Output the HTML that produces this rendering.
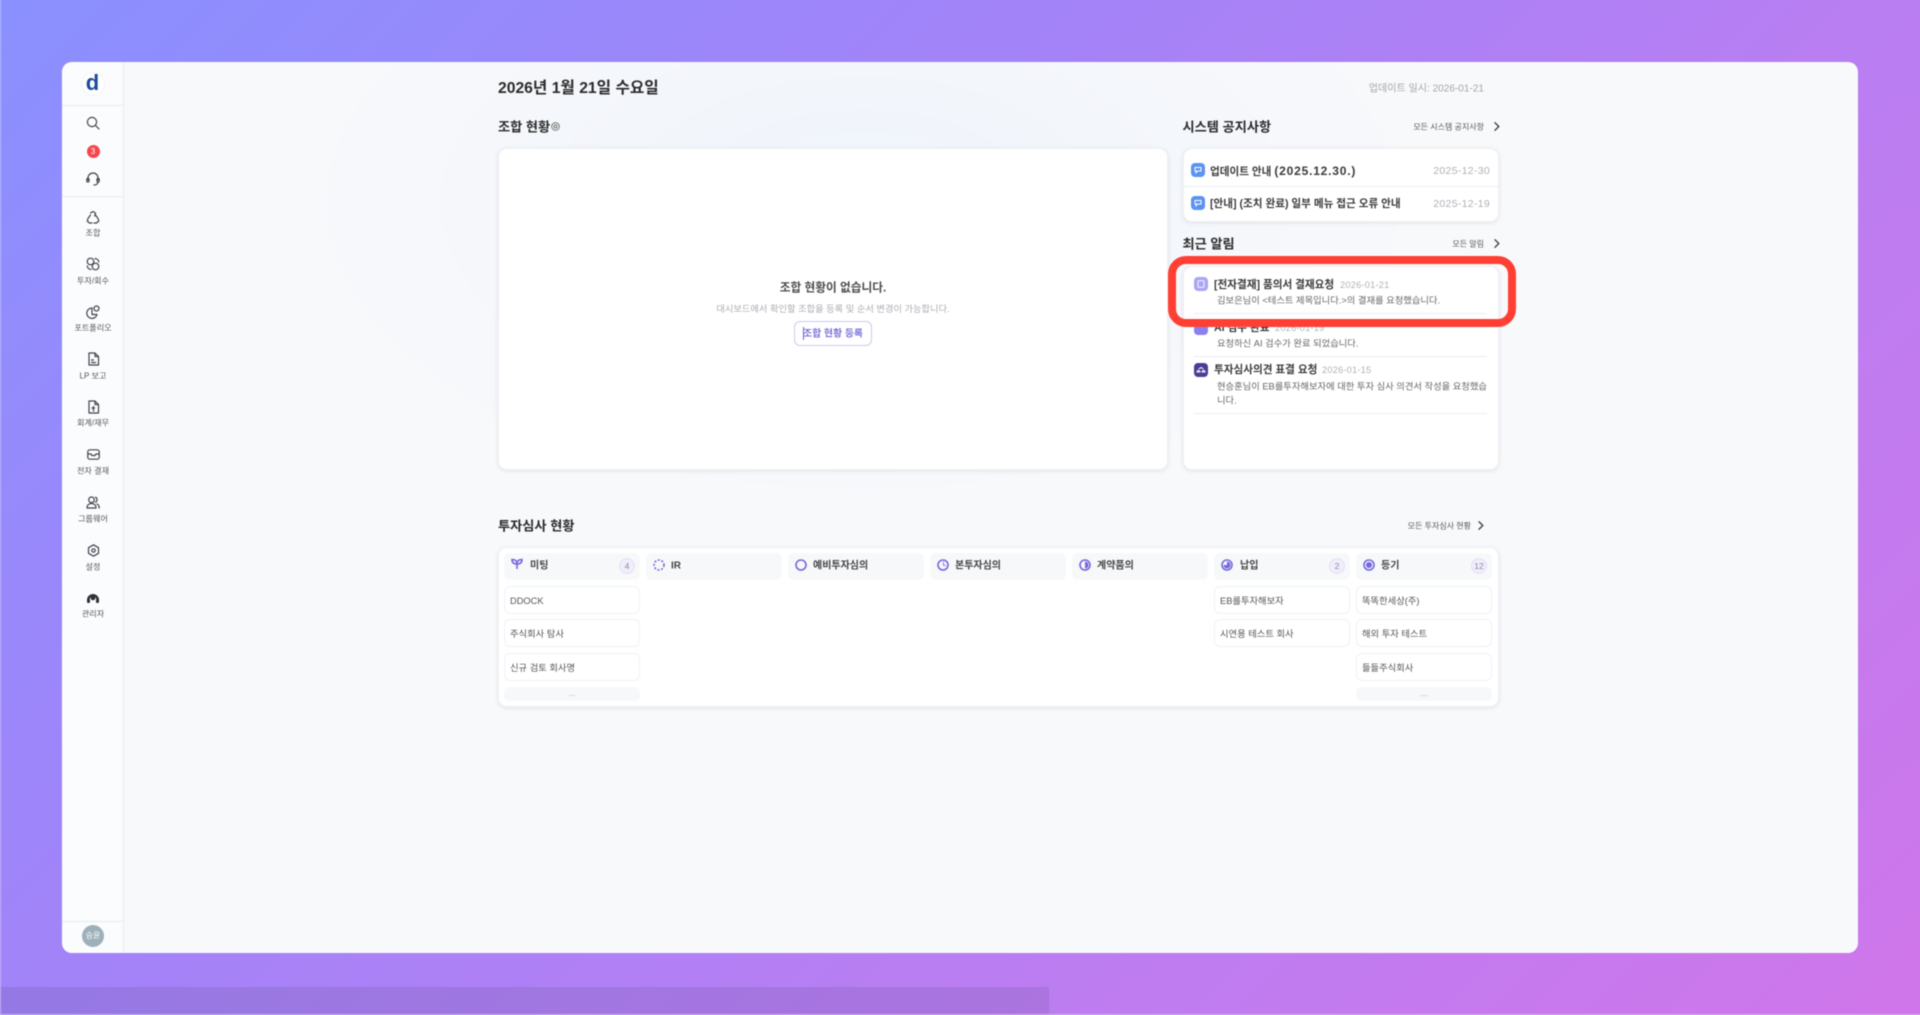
<!DOCTYPE html>
<html lang="ko"><head><meta charset="utf-8"><title>대시보드</title>
<style>
*{box-sizing:border-box;margin:0;padding:0}
html,body{width:1920px;height:1015px;overflow:hidden}
body{position:relative;font-family:"Liberation Sans","Noto Sans CJK KR",sans-serif;background:linear-gradient(135deg,#8a90ff 0%,#a283f8 35%,#b97ef2 65%,#cf76ea 100%);color:#222}
.wrap{position:absolute;left:0;top:0;width:1920px;height:1015px;filter:blur(.4px)}
.edgeL{position:absolute;left:0;top:0;width:1px;height:1015px;background:rgba(255,255,255,.4)}
.edgeB{position:absolute;left:0;top:1014px;width:1920px;height:1px;background:rgba(255,255,255,.4)}
.strip{position:absolute;left:0;top:987px;width:1049px;height:27px;background:rgba(90,70,130,.17)}
.win{position:absolute;left:62px;top:62px;width:1796px;height:891px;border-radius:10px;overflow:hidden;background:#f8f9fb}
.glow{position:absolute;left:62px;top:62px;width:1796px;height:891px;border-radius:10px;background:radial-gradient(ellipse 560px 300px at 800px 140px,#eff4fc 0%,rgba(239,244,252,0) 100%)}
.abs{position:absolute}
.side{position:absolute;left:62px;top:62px;width:62px;height:891px;background:#fbfcfd;border-right:1px solid #e9ebee;border-radius:10px 0 0 10px}
.hr{position:absolute;left:62px;width:61px;height:1px;background:#e7e9ec}
.t{position:absolute;white-space:nowrap;transform:translateY(calc(-50% + 1.3px));line-height:1.2}
.c{transform:translate(-50%,calc(-50% + 1.3px));text-align:center}
.nl{font-size:8.1px;color:#555;transform:translate(-50%,calc(-50% + .4px))}
.card{position:absolute;background:#fff;border-radius:9px;box-shadow:0 1px 5px rgba(40,50,90,.11);border:1px solid #f0f1f4}
h2{font-size:13.2px;font-weight:700;color:#2a2a2a}
.more{font-size:8px;color:#555}
.ln{position:absolute;height:1px;background:#ebecef}
.nt{font-size:10.6px;font-weight:700;color:#3a3a3a}
.dt{font-size:10.5px;color:#aeb1b7;letter-spacing:.3px}
.dn{font-size:9.1px}
.ds{font-size:9.3px;color:#666}
.col{position:absolute;top:553px;width:136px;height:27px;background:#f7f8fa;border-radius:6px}
.item{position:absolute;width:136px;height:28px;background:#fff;border:1px solid #f0f1f3;border-radius:6px;font-size:9.3px;color:#555;line-height:28px;padding-left:5px;white-space:nowrap}
.cn{font-size:10px;font-weight:700;color:#444}
.bd{position:absolute;width:16px;height:16px;border-radius:50%;background:#f0eefb;border:1px solid #e3e0f6;color:#8a8a9c;font-size:8.5px;text-align:center;line-height:14px}
.mr{position:absolute;width:136px;height:14px;background:#f7f8fa;border-radius:6px;color:#999;font-size:8px;text-align:center;line-height:14px}
svg{position:absolute;overflow:visible}
.s{fill:none;stroke:#3f444c;stroke-width:1.2;stroke-linecap:round;stroke-linejoin:round}
.p{fill:none;stroke:#7468dd;stroke-width:1.6}
.ch{fill:none;stroke:#444;stroke-width:1.4;stroke-linecap:round;stroke-linejoin:round}
.red{position:absolute;left:1168px;top:256px;width:348px;height:71px;border:8px solid #ff3f33;border-radius:18px}
</style></head>
<body>
<div class="wrap">
<div class="strip"></div>
<div class="edgeL"></div><div class="edgeB"></div>
<div class="win"></div><div class="glow"></div>
<div class="side"></div>
<div class="hr" style="top:105px"></div><div class="hr" style="top:196px"></div><div class="hr" style="top:921px"></div>

<div class="abs" style="left:81px;top:72px;width:24px;height:24px;border-radius:50%;background:#fff;border:1px solid #f1f3f6"></div>
<div class="t c" style="left:92.500px;top:82px;font-size:22px;font-weight:700;color:#1a4d96">d</div>
<svg style="left:86px;top:116px" width="14" height="14" viewBox="0 0 14 14"><circle class="s" cx="6" cy="6" r="4.600"/><path class="s" d="M9.500 9.500L13 13"/></svg>
<div class="abs" style="left:86.500px;top:144.500px;width:13px;height:13px;border-radius:50%;background:#f4474e;color:#fff;font-size:8px;text-align:center;line-height:13px">3</div>
<svg style="left:86px;top:172px" width="14" height="14" viewBox="0 0 14 14"><path class="s" d="M2 8V6a5 5 0 0 1 10 0v2"/><rect class="s" x="0.800" y="6.500" width="2.200" height="3.500" rx="1"/><rect class="s" x="11" y="6.500" width="2.200" height="3.500" rx="1"/><path class="s" d="M12 10c0 2-2 3-4 3"/></svg>

<svg style="left:86px;top:210px" width="14" height="14" viewBox="0 0 14 14"><path class="s" d="M7 1.500l2.500 1.500-.8 3M4.500 3L7 1.500M2 8.500l-.8 2.500L3.500 13H6M12 8.500l.8 2.500L10.500 13H8M4.500 5L2 8.500M9.500 5L12 8.500"/></svg>
<div class="t c nl" style="left:93px;top:233px">조합</div>
<svg style="left:86px;top:257px" width="14" height="14" viewBox="0 0 14 14"><circle class="s" cx="4.500" cy="4.500" r="3.300"/><circle class="s" cx="9.500" cy="9.500" r="3.300"/><path class="s" d="M9 1.500a4 4 0 0 1 3.800 3.500M5 12.500A4 4 0 0 1 1.200 9"/></svg>
<div class="t c nl" style="left:93px;top:281px">투자/회수</div>
<svg style="left:86px;top:305px" width="14" height="14" viewBox="0 0 14 14"><path class="s" d="M6 3a5.200 5.200 0 1 0 5 6.500H6z"/><circle class="s" cx="10.500" cy="3.500" r="2.500"/></svg>
<div class="t c nl" style="left:93px;top:328px">포트폴리오</div>
<svg style="left:87px;top:352px" width="13" height="14" viewBox="0 0 13 14"><path class="s" d="M2 1h6l3.500 3.500V13H2zM8 1v3.500h3.500"/><path class="s" d="M4.500 10.500h4M4.500 8h2"/></svg>
<div class="t c nl" style="left:93px;top:376px">LP 보고</div>
<svg style="left:87px;top:400px" width="13" height="14" viewBox="0 0 13 14"><path class="s" d="M2 1h6l3.500 3.500V13H2zM8 1v3.500h3.500"/><path class="s" d="M6.500 6.500v4.500M5 8h2.500"/></svg>
<div class="t c nl" style="left:93px;top:423px">회계/재무</div>
<svg style="left:87px;top:449px" width="13" height="11" viewBox="0 0 13 11"><rect class="s" x="0.800" y="0.800" width="11.400" height="9.400" rx="2"/><path class="s" d="M1 5h3l1 1.500h3L9 5h3"/></svg>
<div class="t c nl" style="left:93px;top:471px">전자 결재</div>
<svg style="left:86px;top:496px" width="14" height="13" viewBox="0 0 14 13"><circle class="s" cx="5.500" cy="3.800" r="2.800"/><path class="s" d="M1 12c0-3 2-4.500 4.500-4.500S10 9 10 12zM9.500 1.200a2.800 2.800 0 0 1 0 5M11 8c1.500.6 2.200 2 2.200 4"/></svg>
<div class="t c nl" style="left:93px;top:519px">그룹웨어</div>
<svg style="left:87px;top:544px" width="13" height="13" viewBox="0 0 13 13"><path class="s" d="M6.500.8l5 2.900v5.600l-5 2.900-5-2.900V3.700z"/><circle class="s" cx="6.500" cy="6.500" r="1.700"/></svg>
<div class="t c nl" style="left:93px;top:567px">설정</div>
<svg style="left:86px;top:592px" width="14" height="13" viewBox="0 0 14 13"><path d="M1 8a6 6 0 0 1 12 0h-2.500a3.500 3.500 0 0 0-7 0z" fill="#2c3038"/><rect x="1" y="7" width="3" height="4" rx="1" fill="#2c3038"/><rect x="10" y="7" width="3" height="4" rx="1" fill="#2c3038"/><circle cx="7" cy="6" r="2.300" fill="#2c3038"/></svg>
<div class="t c nl" style="left:93px;top:614px">관리자</div>
<div class="abs" style="left:82px;top:925px;width:22px;height:22px;border-radius:50%;background:#9eb0ba;color:#fff;font-size:8px;text-align:center;line-height:22px">승윤</div>

<div class="t" style="left:498px;top:88px;font-size:15.700px;font-weight:700;color:#2a2a2a">2026년 1월 21일 수요일</div>
<div class="t" style="right:436px;top:87.500px;font-size:10.050px;color:#a3a6ac">업데이트 일시: 2026-01-21</div>

<h2 class="t" style="left:498px;top:126px">조합 현황</h2>
<svg style="left:551px;top:122px" width="9" height="9" viewBox="0 0 9 9"><circle cx="4.500" cy="4.500" r="3.800" fill="none" stroke="#666" stroke-width=".9"/><circle cx="4.500" cy="4.500" r="1.500" fill="none" stroke="#666" stroke-width=".9"/></svg>
<div class="card" style="left:498px;top:148px;width:670px;height:322px"></div>
<div class="t c" style="left:833px;top:286.500px;font-size:11.700px;font-weight:700;color:#4a4a4a">조합 현황이 없습니다.</div>
<div class="t c" style="left:833px;top:308px;font-size:9.250px;color:#aaadb3">대시보드에서 확인할 조합을 등록 및 순서 변경이 가능합니다.</div>
<div class="abs" style="left:794px;top:321px;width:78px;height:25px;border:1px solid #cfcaf0;border-radius:6px;background:#fff"></div>
<div class="abs" style="left:803px;top:327px;width:1px;height:13px;background:#6a60c8"></div>
<div class="t c" style="left:833px;top:332.500px;font-size:9.900px;font-weight:700;color:#7b70db">조합 현황 등록</div>

<h2 class="t" style="left:1182.500px;top:126px">시스템 공지사항</h2>
<div class="t more" style="right:436px;top:126px">모든 시스템 공지사항</div>
<svg style="left:1494px;top:122px" width="6" height="9" viewBox="0 0 6 9"><path class="ch" d="M1 .8L4.800 4.500 1 8.200"/></svg>
<div class="card" style="left:1183px;top:148px;width:316px;height:74px"></div>
<div class="ln" style="left:1184px;top:186px;width:314px"></div>
<div class="abs" style="left:1191px;top:163px;width:14px;height:14px;border-radius:4px;background:#5b93f2"></div>
<svg style="left:1194px;top:166px" width="8" height="8" viewBox="0 0 8 8"><path d="M1 1.500h6v3.500H3.500L2 6.800V5H1z" fill="none" stroke="#fff" stroke-width="1"/></svg>
<div class="abs" style="left:1191px;top:196px;width:14px;height:14px;border-radius:4px;background:#5b93f2"></div>
<svg style="left:1194px;top:199px" width="8" height="8" viewBox="0 0 8 8"><path d="M1 1.500h6v3.500H3.500L2 6.800V5H1z" fill="none" stroke="#fff" stroke-width="1"/></svg>
<div class="t nt" style="left:1210px;top:170px">업데이트 안내 <span style="font-size:12px;letter-spacing:.8px">(2025.12.30.)</span></div>
<div class="t nt" style="left:1210px;top:203px">[안내] (조치 완료) 일부 메뉴 접근 오류 안내</div>
<div class="t dt" style="right:430px;top:170px">2025-12-30</div>
<div class="t dt" style="right:430px;top:203px">2025-12-19</div>

<h2 class="t" style="left:1182.500px;top:243px">최근 알림</h2>
<div class="t more" style="right:436px;top:243px">모든 알림</div>
<svg style="left:1494px;top:239px" width="6" height="9" viewBox="0 0 6 9"><path class="ch" d="M1 .8L4.800 4.500 1 8.200"/></svg>
<div class="card" style="left:1183px;top:266px;width:316px;height:204px"></div>

<div class="abs" style="left:1194px;top:277px;width:14px;height:14px;border-radius:4px;background:#aaa6f4"></div>
<svg style="left:1197px;top:280px" width="8" height="8" viewBox="0 0 8 8"><rect x="1" y=".7" width="6" height="6.600" rx="1" fill="none" stroke="#fff" stroke-width=".9"/></svg>
<div class="t nt" style="left:1214px;top:283.500px">[전자결재] 품의서 결재요청</div>
<div class="t dt dn" style="left:1340px;top:283.500px">2026-01-21</div>
<div class="t ds" style="left:1217px;top:299.500px">김보은님이 &lt;테스트 제목입니다.&gt;의 결재를 요청했습니다.</div>
<div class="ln" style="left:1194px;top:313px;width:293px"></div>

<div class="abs" style="left:1194px;top:321px;width:14px;height:14px;border-radius:4px;background:#8b80ee"></div>
<div class="t nt" style="left:1214px;top:326.500px">AI 검수 완료</div>
<div class="t dt dn" style="left:1275px;top:326.500px">2026-01-19</div>
<div class="t ds" style="left:1217px;top:342.500px">요청하신 AI 검수가 완료 되었습니다.</div>
<div class="ln" style="left:1194px;top:356px;width:293px"></div>

<div class="abs" style="left:1194px;top:363px;width:14px;height:14px;border-radius:4px;background:#4a3d96"></div>
<svg style="left:1196px;top:366px" width="10" height="8" viewBox="0 0 10 8"><path d="M1 6a1.500 1.500 0 0 1 3 0zM6 6a1.500 1.500 0 0 1 3 0zM2.500 3L5 1.500 7.500 3" fill="none" stroke="#fff" stroke-width=".9"/></svg>
<div class="t nt" style="left:1214px;top:368.500px">투자심사의견 표결 요청</div>
<div class="t dt dn" style="left:1322px;top:368.500px">2026-01-15</div>
<div class="t ds" style="left:1217px;top:385.500px">현승훈님이 EB를투자해보자에 대한 투자 심사 의견서 작성을 요청했습</div>
<div class="t ds" style="left:1217px;top:399.500px">니다.</div>
<div class="ln" style="left:1194px;top:413px;width:293px"></div>

<div class="red"></div>

<h2 class="t" style="left:498px;top:524.500px">투자심사 현황</h2>
<div class="t more" style="right:449px;top:525px">모든 투자심사 현황</div>
<svg style="left:1478px;top:521px" width="6" height="9" viewBox="0 0 6 9"><path class="ch" d="M1 .8L4.800 4.500 1 8.200"/></svg>
<div class="card" style="left:498px;top:547px;width:1001px;height:160px"></div>

<div class="col" style="left:504px"></div><div class="col" style="left:646px"></div><div class="col" style="left:788px"></div><div class="col" style="left:930px"></div><div class="col" style="left:1072px"></div><div class="col" style="left:1214px"></div><div class="col" style="left:1356px"></div>

<svg style="left:511px;top:558px" width="12" height="12" viewBox="0 0 12 12"><path class="p" stroke-width="1.300" d="M6 11V6M6 6C3 6 1 5 1 1.500c3 0 5 1 5 4.500zM6 6c3 0 5-1 5-4.500-3 0-5 1-5 4.500z"/></svg>
<div class="t cn" style="left:530px;top:565px">미팅</div>
<div class="bd" style="left:619px;top:558px">4</div>
<svg style="left:653px;top:559px" width="12" height="12" viewBox="0 0 12 12"><circle class="p" stroke-width="1.400" stroke-dasharray="2 1.700" cx="6" cy="6" r="5"/></svg>
<div class="t cn" style="left:671px;top:565px">IR</div>
<svg style="left:795px;top:559px" width="12" height="12" viewBox="0 0 12 12"><circle class="p" cx="6" cy="6" r="5"/></svg>
<div class="t cn" style="left:813px;top:565px">예비투자심의</div>
<svg style="left:937px;top:559px" width="12" height="12" viewBox="0 0 12 12"><circle class="p" cx="6" cy="6" r="5"/><path d="M6 6V2.500h.8V6z" fill="#7468dd"/><path d="M6 6h3v.8H6z" fill="#7468dd"/></svg>
<div class="t cn" style="left:955px;top:565px">본투자심의</div>
<svg style="left:1079px;top:559px" width="12" height="12" viewBox="0 0 12 12"><circle class="p" cx="6" cy="6" r="5"/><path d="M6 2.500a3.500 3.500 0 0 1 0 7z" fill="#7468dd"/></svg>
<div class="t cn" style="left:1097px;top:565px">계약품의</div>
<svg style="left:1221px;top:559px" width="12" height="12" viewBox="0 0 12 12"><circle class="p" cx="6" cy="6" r="5"/><path d="M6 2.500A3.500 3.500 0 1 1 2.500 6H6z" fill="#7468dd"/></svg>
<div class="t cn" style="left:1240px;top:565px">납입</div>
<div class="bd" style="left:1329px;top:558px">2</div>
<svg style="left:1363px;top:559px" width="12" height="12" viewBox="0 0 12 12"><circle class="p" cx="6" cy="6" r="5"/><circle cx="6" cy="6" r="3" fill="#7468dd"/></svg>
<div class="t cn" style="left:1381px;top:565px">등기</div>
<div class="bd" style="left:1471px;top:558px">12</div>

<div class="item" style="left:504px;top:586px">DDOCK</div>
<div class="item" style="left:504px;top:619px">주식회사 탐사</div>
<div class="item" style="left:504px;top:653px">신규 검토 회사명</div>
<div class="mr" style="left:504px;top:687px">...</div>
<div class="item" style="left:1214px;top:586px">EB를투자해보자</div>
<div class="item" style="left:1214px;top:619px">시연용 테스트 회사</div>
<div class="item" style="left:1356px;top:586px">똑똑한세상(주)</div>
<div class="item" style="left:1356px;top:619px">해외 투자 테스트</div>
<div class="item" style="left:1356px;top:653px">들들주식회사</div>
<div class="mr" style="left:1356px;top:687px">...</div>
</div>
</body></html>
